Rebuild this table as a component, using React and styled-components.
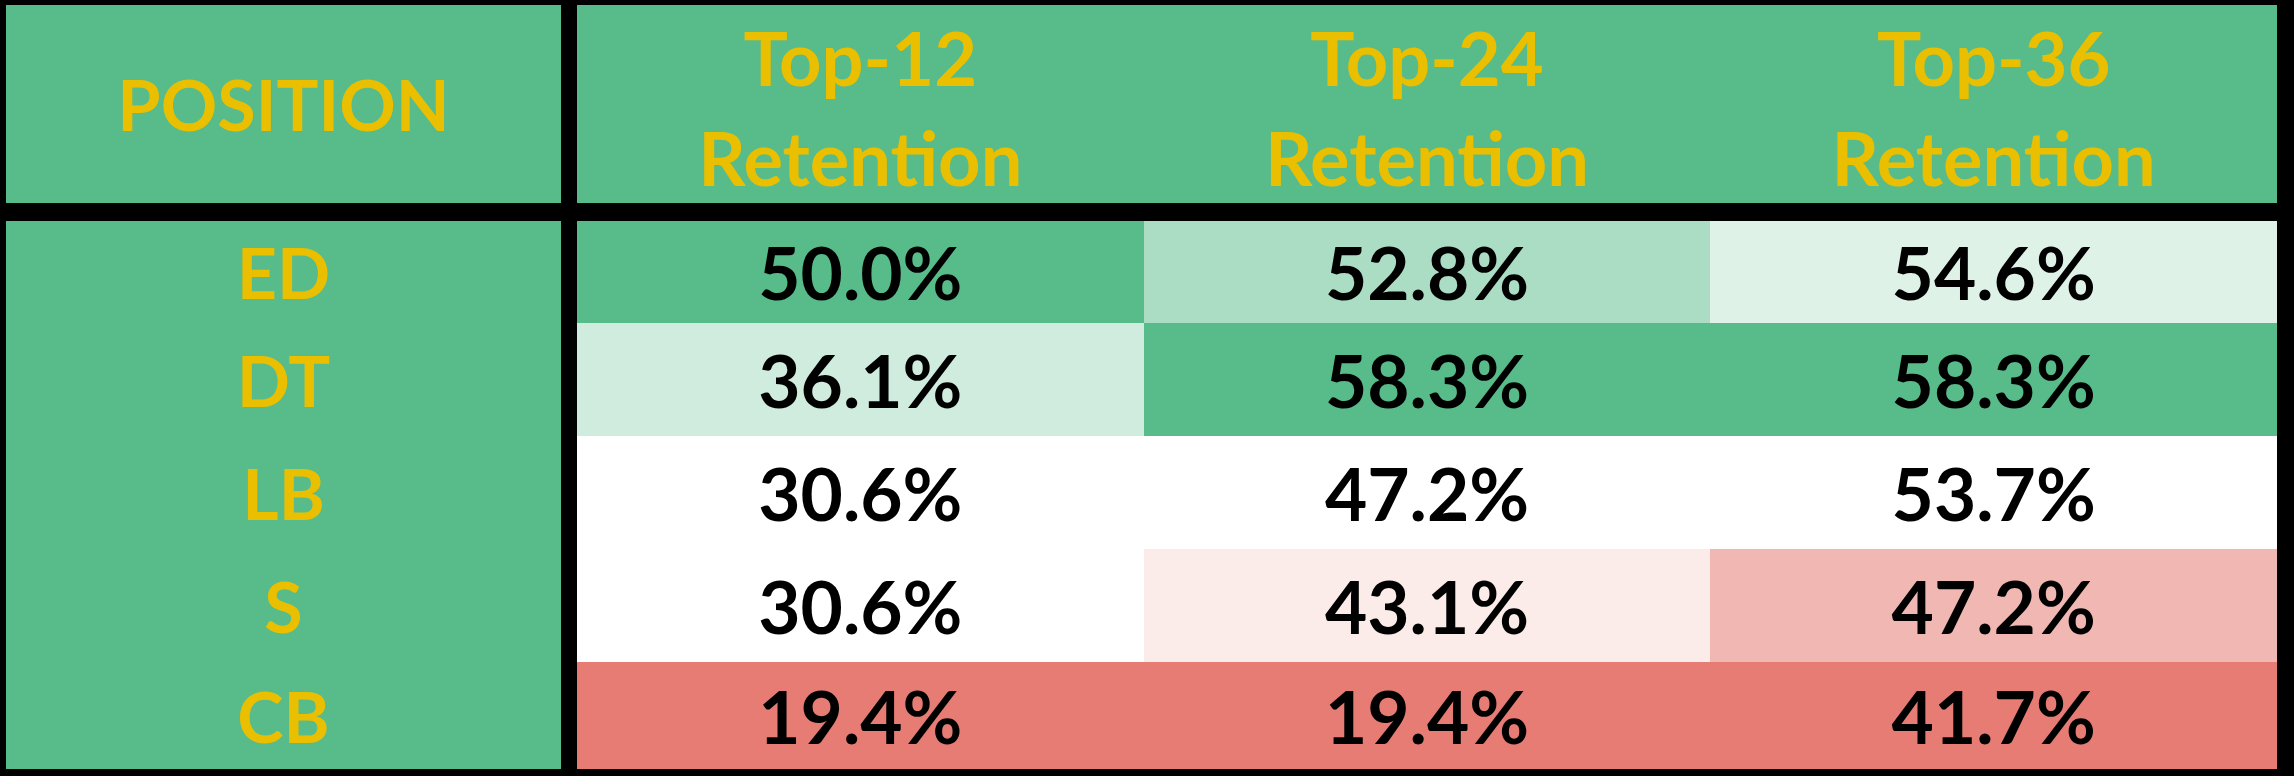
import React from "react";
import styled, { createGlobalStyle } from "styled-components";

const GREEN = [87, 187, 138];
const WHITE = [255, 255, 255];
const RED = [230, 124, 115];

const GlobalStyle = createGlobalStyle`
  body {
    margin: 0;
    background: #000;
  }
`;

const Frame = styled.div`
  box-sizing: border-box;
  width: 2294px;
  height: 776px;
  padding: 5px 17px 7px 6px;
  background: #000;
  display: grid;
  grid-template-columns: 571px repeat(3, 1fr);
  grid-template-rows: 216px 102px repeat(3, 113px) 107px;
  font-family: Lato, "Open Sans", sans-serif;
  font-weight: 700;
`;

const Cell = styled.div`
  box-sizing: border-box;
  display: flex;
  align-items: center;
  justify-content: center;
  text-align: center;
`;

const HeadCell = styled(Cell)`
  background: #57bb8a;
  color: #eabf00;
  font-size: ${(props) => (props.$first ? "70px" : "74px")};
  line-height: 100px;
  padding-top: ${(props) => (props.$first ? "0" : "8px")};
  border-bottom: 18px solid #000;
  border-right: ${(props) => (props.$first ? "16px solid #000" : "none")};
`;

const PosCell = styled(Cell)`
  background: #57bb8a;
  color: #eabf00;
  font-size: 70px;
  border-right: 16px solid #000;
`;

const ValueCell = styled(Cell)`
  background: ${(props) => props.$bg};
  color: #000;
  font-size: 73px;
`;

const positions = ["ED", "DT", "LB", "S", "CB"];

const columns = [
  { label: "Top-12", values: [50.0, 36.1, 30.6, 30.6, 19.4] },
  { label: "Top-24", values: [52.8, 58.3, 47.2, 43.1, 19.4] },
  { label: "Top-36", values: [54.6, 58.3, 53.7, 47.2, 41.7] },
];

const mix = (a, b, t) =>
  `rgb(${a.map((c, i) => Math.round(c + (b[i] - c) * t)).join(",")})`;

// min -> red, median -> white, max -> green
const scaleColor = (value, values) => {
  const sorted = [...values].sort((a, b) => a - b);
  const min = sorted[0];
  const max = sorted[sorted.length - 1];
  const mid = sorted[Math.floor(sorted.length / 2)];
  if (value >= mid) {
    return mix(WHITE, GREEN, max === mid ? 0 : (value - mid) / (max - mid));
  }
  return mix(WHITE, RED, (mid - value) / (mid - min));
};

const App = () => {
  return (
    <>
      <GlobalStyle />
      <Frame>
        <HeadCell $first>POSITION</HeadCell>
        {columns.map((col) => (
          <HeadCell key={col.label}>
            {col.label}
            <br />
            Retention
          </HeadCell>
        ))}
        {positions.map((pos, rowIndex) => (
          <React.Fragment key={pos}>
            <PosCell>{pos}</PosCell>
            {columns.map((col) => (
              <ValueCell
                key={col.label}
                $bg={scaleColor(col.values[rowIndex], col.values)}
              >
                {col.values[rowIndex].toFixed(1)}%
              </ValueCell>
            ))}
          </React.Fragment>
        ))}
      </Frame>
    </>
  );
};

export default App;
